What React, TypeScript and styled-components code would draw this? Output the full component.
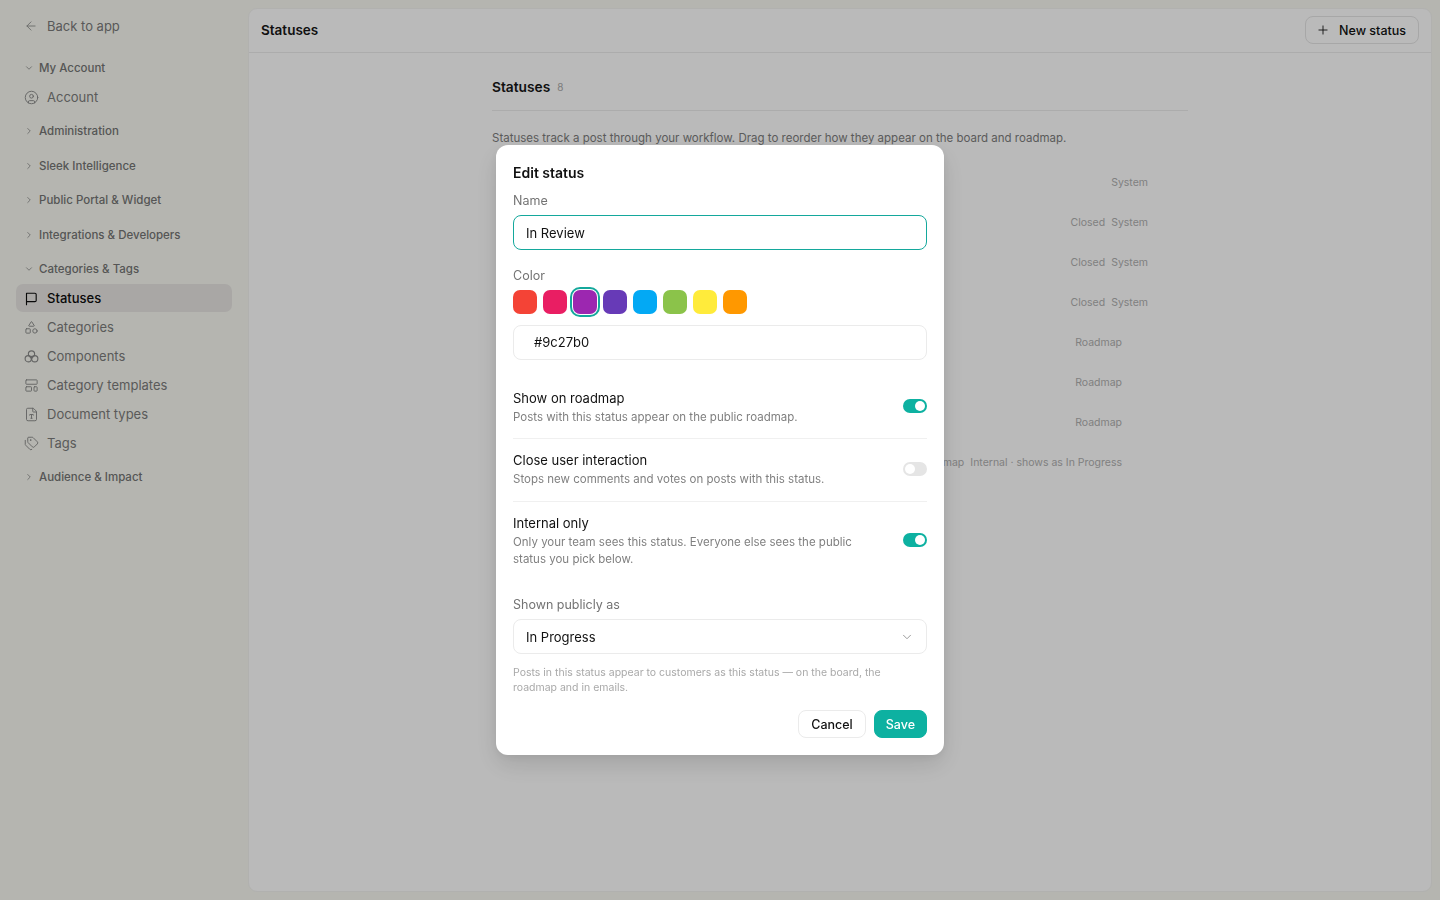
import React from 'react';
import styled, { createGlobalStyle } from 'styled-components';
import { ArrowLeft, ChevronDown, ChevronRight, CircleUser, Shapes, LayoutTemplate, FileType, Tags, Plus } from 'lucide-react';

const GlobalStyle = createGlobalStyle`
  html, body { margin: 0; padding: 0; height: 100%; overflow: hidden; }
  body { font-family: Inter, "Liberation Sans", sans-serif; background: #f8f9f1; color: #111; }
  * { box-sizing: border-box; }
`;

const Page = styled.div`
  display: flex;
  height: 900px;
  padding: 8px 8px 8px 0;
`;

const Sidebar = styled.aside`
  width: 248px;
  flex-shrink: 0;
  padding: 9px 16px 0;
  display: flex;
  flex-direction: column;
`;

const BackLink = styled.div`
  display: flex;
  align-items: center;
  gap: 9px;
  height: 18px;
  padding-left: 8px;
  margin-bottom: 23.75px;
  font-size: 13px;
  color: #7a7a7a;
  svg { color: #8e8e8e; }
`;

const Group = styled.div<{ $open?: boolean }>`
  padding-bottom: ${(p) => (p.$open ? '10.75px' : '16px')};
`;

const GroupLabel = styled.div`
  display: flex;
  align-items: center;
  gap: 5px;
  height: 18.5px;
  padding-left: 8px;
  font-size: 11.5px;
  font-weight: 500;
  color: #757575;
  svg { color: #8e8e8e; }
`;

const NavList = styled.div`
  display: flex;
  flex-direction: column;
  gap: 1px;
  margin-top: 5.75px;
`;

const NavItem = styled.div<{ $active?: boolean }>`
  display: flex;
  align-items: center;
  gap: 8px;
  height: 28px;
  padding-left: 8px;
  border-radius: 7px;
  font-size: 13px;
  font-weight: ${(p) => (p.$active ? 500 : 400)};
  color: ${(p) => (p.$active ? '#0d0d0d' : '#7c7c7c')};
  background: ${(p) => (p.$active ? '#e8e5e3' : 'transparent')};
  svg { color: ${(p) => (p.$active ? '#0d0d0d' : '#8a8a8a')}; flex-shrink: 0; }
`;

const Main = styled.main`
  flex: 1;
  background: #ffffff;
  border: 1px solid #f3f3f0;
  border-radius: 9px;
  display: flex;
  flex-direction: column;
`;

const Header = styled.header`
  height: 44px;
  flex-shrink: 0;
  display: flex;
  align-items: center;
  justify-content: space-between;
  padding: 0 12px 1px;
  border-bottom: 1px solid #ececec;
`;

const HeaderTitle = styled.div`
  font-size: 13.5px;
  font-weight: 600;
  color: #171717;
`;

const NewButton = styled.div`
  display: flex;
  align-items: center;
  gap: 9px;
  height: 28px;
  padding: 0 12px 0 10px;
  border: 1px solid #e5e5e5;
  border-radius: 8px;
  font-size: 12.5px;
  font-weight: 500;
  color: #111;
`;

const Content = styled.div`
  width: 696px;
  margin-left: 243px;
  padding-top: 24px;
`;

const TitleRow = styled.div`
  display: flex;
  align-items: center;
  gap: 7px;
  height: 20px;
`;

const Title = styled.div`
  font-size: 13.75px;
  font-weight: 600;
  color: #171717;
`;

const Count = styled.span`
  font-size: 10px;
  color: #a8a8a8;
`;

const Rule = styled.div`
  height: 1px;
  background: #ececec;
  margin-top: 13px;
`;

const Description = styled.p`
  margin: 18px 0 0;
  font-size: 11.5px;
  line-height: 18px;
  color: #7d7d7d;
`;

const StatusList = styled.div`
  margin-top: 15px;
`;

const StatusRow = styled.div<{ $inset: number }>`
  display: flex;
  align-items: center;
  justify-content: flex-end;
  gap: 6px;
  height: 40px;
  padding-right: ${(p) => p.$inset}px;
  font-size: 10.5px;
  color: #b0b0b0;
`;

const Backdrop = styled.div`
  position: fixed;
  inset: 0;
  background: rgba(0, 0, 0, 0.27);
  display: flex;
  align-items: flex-start;
  justify-content: center;
  padding-top: 145px;
`;

const Modal = styled.div`
  width: 448px;
  height: 610px;
  background: #fff;
  border-radius: 12px;
  padding: 18px 17px 17px;
  display: flex;
  flex-direction: column;
  box-shadow: 0 10px 25px rgba(0, 0, 0, 0.12), 0 2px 8px rgba(0, 0, 0, 0.06);
`;

const ModalTitle = styled.h2`
  margin: 0;
  font-size: 14px;
  line-height: 20px;
  font-weight: 600;
  color: #111;
`;

const FieldLabel = styled.label`
  display: block;
  font-size: 12.5px;
  line-height: 18px;
  font-weight: 400;
  color: #737373;
`;

const NameLabel = styled(FieldLabel)`
  margin-top: 9px;
  margin-bottom: 5px;
`;

const ColorLabel = styled(FieldLabel)`
  margin-top: 17px;
  margin-bottom: 5px;
`;

const PublicLabel = styled(FieldLabel)`
  margin-bottom: 5px;
`;

const Field = styled.div<{ $focused?: boolean; $inset?: number }>`
  display: flex;
  align-items: center;
  justify-content: space-between;
  height: 36px;
  padding: 0 12px 0 ${(p) => p.$inset ?? 12}px;
  border: 1px solid ${(p) => (p.$focused ? '#14a89c' : '#ebebeb')};
  border-radius: 8px;
  font-size: 13px;
  color: #111;
  svg { color: #8e8e8e; }
`;

const SelectField = styled(Field)`
  padding-top: 2px;
`;

const Swatches = styled.div`
  display: flex;
  gap: 6px;
  margin-bottom: 10.5px;
`;

const Swatch = styled.div<{ $color: string; $selected?: boolean }>`
  position: relative;
  width: 24px;
  height: 24px;
  border-radius: 7px;
  background: ${(p) => p.$color};
  ${(p) => p.$selected && `
    &::after {
      content: '';
      position: absolute;
      inset: -3px;
      border: 2px solid #14a89c;
      border-radius: 10px;
    }
  `}
`;

const Options = styled.div`
  margin-top: 27.5px;
`;

const Option = styled.div<{ $divider?: boolean; $height: number; $pad: number }>`
  display: flex;
  align-items: flex-start;
  justify-content: space-between;
  height: ${(p) => p.$height}px;
  padding-top: ${(p) => p.$pad}px;
  border-bottom: 1px solid ${(p) => (p.$divider ? '#f0f0f0' : 'transparent')};
`;

const OptionText = styled.div`
  width: 350px;
`;

const OptionTitle = styled.div`
  font-size: 13px;
  line-height: 20px;
  color: #111;
`;

const OptionHint = styled.div`
  margin-top: 1px;
  font-size: 11.5px;
  line-height: 17px;
  color: #808080;
`;

const Toggle = styled.div<{ $on?: boolean; $top: number }>`
  position: relative;
  margin-top: ${(p) => p.$top}px;
  width: 24px;
  height: 14px;
  border-radius: 7px;
  flex-shrink: 0;
  background: ${(p) => (p.$on ? '#0db1a1' : '#e5e5e5')};
  &::after {
    content: '';
    position: absolute;
    top: 2px;
    left: ${(p) => (p.$on ? '12px' : '2px')};
    width: 10px;
    height: 10px;
    border-radius: 50%;
    background: #fff;
  }
`;

const HelpText = styled.p`
  margin: 11px 0 0;
  font-size: 10.5px;
  line-height: 15px;
  color: #a9a9a9;
`;

const Actions = styled.div`
  display: flex;
  justify-content: flex-end;
  gap: 8px;
  margin-top: 15px;
`;

const Button = styled.div<{ $primary?: boolean }>`
  display: flex;
  align-items: center;
  height: 28px;
  padding: 1px ${(p) => (p.$primary ? '11px' : '12px')} 0;
  border-radius: 8px;
  font-size: 12.5px;
  font-weight: 500;
  border: 1px solid ${(p) => (p.$primary ? '#0db1a1' : '#ebebeb')};
  background: ${(p) => (p.$primary ? '#0db1a1' : '#fff')};
  color: ${(p) => (p.$primary ? '#fff' : '#111')};
`;

// these two are not in lucide in the shape the reference uses
const FlagIcon = ({ size }: { size: number }) => (
  <svg width={size} height={size} viewBox="0 0 24 24" fill="none" stroke="currentColor" strokeWidth={1.8} strokeLinecap="round" strokeLinejoin="round">
    <path d="M4 22V3.5H17.5a2 2 0 0 1 2 2V15a2 2 0 0 1-2 2H4" />
  </svg>
);

const ClusterIcon = ({ size }: { size: number }) => (
  <svg width={size} height={size} viewBox="0 0 24 24" fill="none" stroke="currentColor" strokeWidth={1.8}>
    <circle cx="12" cy="8" r="5" />
    <circle cx="6.8" cy="15.5" r="5" />
    <circle cx="17.2" cy="15.5" r="5" />
    <circle cx="12" cy="13" r="1.5" />
  </svg>
);

const collapsedTop = ['Administration', 'Sleek Intelligence', 'Public Portal & Widget', 'Integrations & Developers'];
const categoryItems = [
  { label: 'Statuses', icon: <FlagIcon size={15} />, active: true },
  { label: 'Categories', icon: <Shapes size={15} strokeWidth={1.5} /> },
  { label: 'Components', icon: <ClusterIcon size={15} /> },
  { label: 'Category templates', icon: <LayoutTemplate size={15} strokeWidth={1.5} /> },
  { label: 'Document types', icon: <FileType size={15} strokeWidth={1.5} /> },
  { label: 'Tags', icon: <Tags size={15} strokeWidth={1.5} /> },
];
const rows = [
  { tags: ['System'], inset: 40 },
  { tags: ['Closed', 'System'], inset: 40 },
  { tags: ['Closed', 'System'], inset: 40 },
  { tags: ['Closed', 'System'], inset: 40 },
  { tags: ['Roadmap'], inset: 66 },
  { tags: ['Roadmap'], inset: 66 },
  { tags: ['Roadmap'], inset: 66 },
  { tags: ['Roadmap', 'Internal · shows as In Progress'], inset: 66 },
];
const swatches = ['#f44336', '#e91e63', '#9c27b0', '#673ab7', '#03a9f4', '#8bc34a', '#ffeb3b', '#ff9800'];

const App = () => {
  return (
    <>
      <GlobalStyle />
      <Page>
        <Sidebar>
          <BackLink><ArrowLeft size={14} strokeWidth={1.5} />Back to app</BackLink>
          <Group $open>
            <GroupLabel><ChevronDown size={10} />My Account</GroupLabel>
            <NavList>
              <NavItem><CircleUser size={15} strokeWidth={1.5} />Account</NavItem>
            </NavList>
          </Group>
          {collapsedTop.map((label) => (
            <Group key={label}>
              <GroupLabel><ChevronRight size={10} />{label}</GroupLabel>
            </Group>
          ))}
          <Group $open>
            <GroupLabel><ChevronDown size={10} />Categories &amp; Tags</GroupLabel>
            <NavList>
              {categoryItems.map((item) => (
                <NavItem key={item.label} $active={item.active}>
                  {item.icon}
                  {item.label}
                </NavItem>
              ))}
            </NavList>
          </Group>
          <Group>
            <GroupLabel><ChevronRight size={10} />Audience &amp; Impact</GroupLabel>
          </Group>
        </Sidebar>
        <Main>
          <Header>
            <HeaderTitle>Statuses</HeaderTitle>
            <NewButton><Plus size={14} strokeWidth={1.5} />New status</NewButton>
          </Header>
          <Content>
            <TitleRow><Title>Statuses</Title><Count>8</Count></TitleRow>
            <Rule />
            <Description>Statuses track a post through your workflow. Drag to reorder how they appear on the board and roadmap.</Description>
            <StatusList>
              {rows.map((row, i) => (
                <StatusRow key={i} $inset={row.inset}>
                  {row.tags.map((tag) => <span key={tag}>{tag}</span>)}
                </StatusRow>
              ))}
            </StatusList>
          </Content>
        </Main>
      </Page>
      <Backdrop>
        <Modal>
          <ModalTitle>Edit status</ModalTitle>
          <NameLabel>Name</NameLabel>
          <Field $focused>In Review</Field>
          <ColorLabel>Color</ColorLabel>
          <Swatches>
            {swatches.map((c) => <Swatch key={c} $color={c} $selected={c === '#9c27b0'} />)}
          </Swatches>
          <Field $inset={20}>#9c27b0</Field>
          <Options>
            <Option $divider $height={51} $pad={0}>
              <OptionText>
                <OptionTitle>Show on roadmap</OptionTitle>
                <OptionHint>Posts with this status appear on the public roadmap.</OptionHint>
              </OptionText>
              <Toggle $on $top={11} />
            </Option>
            <Option $divider $height={63} $pad={11}>
              <OptionText>
                <OptionTitle>Close user interaction</OptionTitle>
                <OptionHint>Stops new comments and votes on posts with this status.</OptionHint>
              </OptionText>
              <Toggle $top={12} />
            </Option>
            <Option $height={94} $pad={11}>
              <OptionText>
                <OptionTitle>Internal only</OptionTitle>
                <OptionHint>Only your team sees this status. Everyone else sees the public status you pick below.</OptionHint>
              </OptionText>
              <Toggle $on $top={20} />
            </Option>
          </Options>
          <PublicLabel>Shown publicly as</PublicLabel>
          <SelectField>In Progress<ChevronDown size={14} strokeWidth={1.5} /></SelectField>
          <HelpText>Posts in this status appear to customers as this status — on the board, the roadmap and in emails.</HelpText>
          <Actions>
            <Button>Cancel</Button>
            <Button $primary>Save</Button>
          </Actions>
        </Modal>
      </Backdrop>
    </>
  );
};

export default App;
